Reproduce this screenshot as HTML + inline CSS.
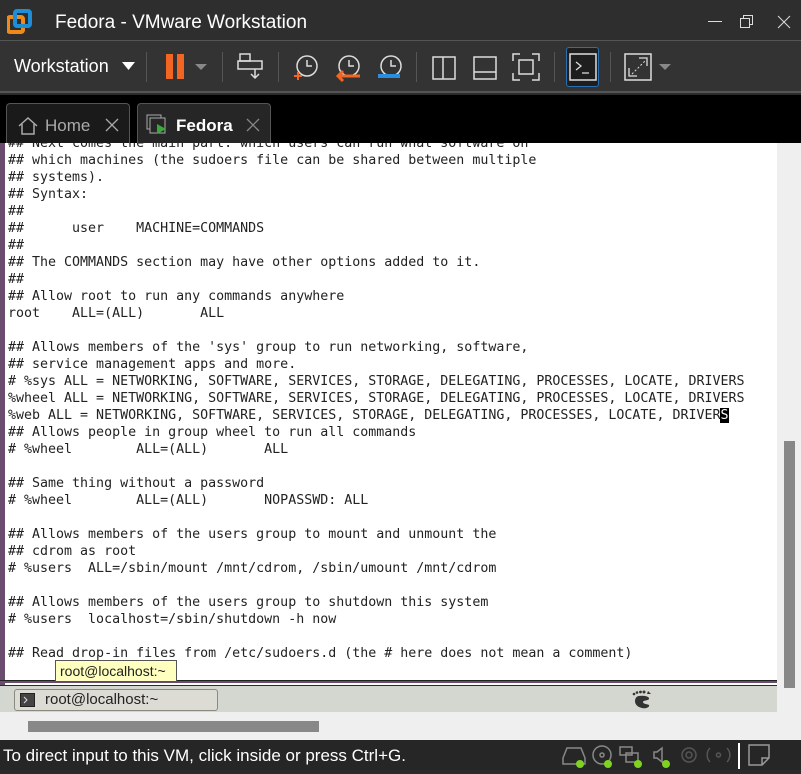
<!DOCTYPE html>
<html><head><meta charset="utf-8"><style>
*{margin:0;padding:0;box-sizing:border-box}
body{width:801px;height:774px;overflow:hidden;background:#2b2b2b;font-family:"Liberation Sans",sans-serif;position:relative}
.abs{position:absolute}
#title{left:0;top:0;width:801px;height:40px;background:#2e2e2e;color:#fff;font-size:19px}
#tool{left:0;top:40px;width:801px;height:53px;background:#333;border-top:1px solid #555;border-bottom:2px solid #555}
#tabs{left:0;top:95px;width:801px;height:48px;background:#000}
.tab{position:absolute;top:8px;height:42px;border:1px solid #555;border-bottom:none;border-radius:4px 4px 0 0;background:#1a1a1a;color:#aaa;font-size:17px}
#term{left:0;top:143px;width:777px;height:542px;background:#fff;overflow:hidden;border-left:5px solid #6a4d6e;}
#term pre{position:absolute;left:3px;top:-8px;font-family:"DejaVu Sans Mono",monospace;font-size:13.3px;line-height:17px;color:#222}
.sep{position:absolute;top:11px;width:1px;height:30px;background:#555}
svg{position:absolute}
</style></head><body>
<div id="title" class="abs">
<svg style="left:7px;top:9px" width="26" height="26"><rect x="1" y="8" width="15" height="15" rx="2" fill="none" stroke="#f08a17" stroke-width="4"/><rect x="8" y="2" width="15" height="15" rx="2" fill="none" stroke="#1e8fd6" stroke-width="4"/></svg>
<div class="abs" style="left:55px;top:12px">Fedora - VMware Workstation</div>
<div class="abs" style="left:708px;top:21px;width:14px;height:1px;background:#ddd"></div>
<svg style="left:740px;top:15px" width="14" height="14"><rect x="0.5" y="3.5" width="9" height="9" fill="none" stroke="#ddd"/><path d="M3.5 3.5V0.5h9v9h-3" fill="none" stroke="#ddd"/></svg>
<svg style="left:777px;top:15px" width="14" height="14"><path d="M1 1L13 13M13 1L1 13" stroke="#ddd"/></svg>
</div>
<div id="tool" class="abs">
<div class="abs" style="left:14px;top:15px;color:#fff;font-size:18px">Workstation</div>
<svg style="left:122px;top:21px" width="14" height="9"><path d="M0 0h13L6.5 8z" fill="#fff"/></svg>
<div class="sep" style="left:146px"></div>
<div class="abs" style="left:166px;top:13px;width:7px;height:25px;background:#f26522"></div>
<div class="abs" style="left:177px;top:13px;width:7px;height:25px;background:#f26522"></div>
<svg style="left:195px;top:23px" width="12" height="7"><path d="M0 0h12L6 6z" fill="#888"/></svg>
<div class="sep" style="left:222px"></div>
<svg style="left:237px;top:11px" width="28" height="30"><rect x="3" y="2" width="10" height="7" fill="none" stroke="#ddd" stroke-width="1.5"/><rect x="1" y="9" width="24" height="8" fill="none" stroke="#ddd" stroke-width="1.5"/><path d="M18 17v9M14 22l4 4 4-4" fill="none" stroke="#ddd" stroke-width="1.5"/></svg>
<div class="sep" style="left:278px"></div>
<svg style="left:292px;top:13px" width="28" height="28"><circle cx="15" cy="12" r="10" fill="none" stroke="#ddd" stroke-width="1.5"/><path d="M15 6v6h5" fill="none" stroke="#ddd" stroke-width="1.5"/><path d="M2 22h8M6 18v8" stroke="#f26522" stroke-width="2"/></svg>
<svg style="left:334px;top:13px" width="28" height="28"><circle cx="15" cy="12" r="10" fill="none" stroke="#ddd" stroke-width="1.5"/><path d="M15 6v6h5" fill="none" stroke="#ddd" stroke-width="1.5"/><path d="M26 22H4M9 17l-5 5 5 5" fill="none" stroke="#f26522" stroke-width="3"/></svg>
<svg style="left:376px;top:13px" width="28" height="28"><circle cx="15" cy="12" r="10" fill="none" stroke="#ddd" stroke-width="1.5"/><path d="M15 6v6h5" fill="none" stroke="#ddd" stroke-width="1.5"/><path d="M2 22h22" stroke="#2a8ee0" stroke-width="4"/></svg>
<div class="sep" style="left:416px"></div>
<svg style="left:432px;top:15px" width="26" height="26"><rect x="1" y="1" width="22" height="22" fill="none" stroke="#ddd" stroke-width="1.5"/><path d="M11 1v22" stroke="#ddd" stroke-width="1.5"/></svg>
<svg style="left:473px;top:15px" width="26" height="26"><rect x="1" y="1" width="22" height="22" fill="none" stroke="#ddd" stroke-width="1.5"/><path d="M1 16h22" stroke="#ddd" stroke-width="1.5"/></svg>
<svg style="left:512px;top:12px" width="30" height="30"><path d="M1 8V1h7M20 1h7v7M27 20v7h-7M8 27H1v-7" fill="none" stroke="#ddd" stroke-width="1.5"/><rect x="7" y="7" width="14" height="14" fill="none" stroke="#ddd" stroke-width="1.5"/></svg>
<div class="sep" style="left:554px"></div>
<div class="abs" style="left:566px;top:6px;width:33px;height:40px;border:1px solid #2a6fb0;border-radius:3px;background:#1e1e1e"></div>
<svg style="left:569px;top:12px" width="28" height="28"><rect x="1" y="1" width="26" height="26" fill="none" stroke="#ddd" stroke-width="1.5"/><path d="M7 9l5 4-5 4M13 20h7" fill="none" stroke="#ddd" stroke-width="1.3"/></svg>
<div class="sep" style="left:610px"></div>
<svg style="left:624px;top:12px" width="30" height="30"><rect x="1" y="1" width="26" height="26" fill="none" stroke="#ddd" stroke-width="1.5"/><path d="M8 21L21 8" stroke="#ddd" stroke-dasharray="2 2"/><path d="M15 5h8v8M5 15v8h8" fill="none" stroke="#ddd" stroke-width="1.3"/></svg>
<svg style="left:659px;top:23px" width="12" height="7"><path d="M0 0h12L6 6z" fill="#888"/></svg>
</div>
<div id="tabs" class="abs">
<div class="tab" style="left:6px;width:124px"><svg style="left:10px;top:12px" width="22" height="20"><path d="M2 10L11 2l9 8M5 8v10h12V8" fill="none" stroke="#aaa" stroke-width="1.5"/></svg><span class="abs" style="left:38px;top:12px">Home</span><svg style="left:98px;top:14px" width="14" height="14"><path d="M1 1L13 13M13 1L1 13" stroke="#aaa" stroke-width="1.3"/></svg></div>
<div class="tab" style="left:137px;width:134px;background:#262626"><svg style="left:8px;top:10px" width="24" height="24"><rect x="1" y="1" width="14" height="14" fill="none" stroke="#aaa"/><rect x="4" y="4" width="15" height="15" fill="#262626" stroke="#aaa"/><path d="M11 10l9 5-9 5z" fill="#3aa83a"/></svg><span class="abs" style="left:38px;top:12px;color:#fff;font-weight:bold">Fedora</span><svg style="left:108px;top:14px" width="14" height="14"><path d="M1 1L13 13M13 1L1 13" stroke="#888" stroke-width="1.3"/></svg></div>
</div>
<div id="term" class="abs"><pre>## Next comes the main part: which users can run what software on
## which machines (the sudoers file can be shared between multiple
## systems).
## Syntax:
##
##      user    MACHINE=COMMANDS
##
## The COMMANDS section may have other options added to it.
##
## Allow root to run any commands anywhere
root    ALL=(ALL)       ALL

## Allows members of the 'sys' group to run networking, software,
## service management apps and more.
# %sys ALL = NETWORKING, SOFTWARE, SERVICES, STORAGE, DELEGATING, PROCESSES, LOCATE, DRIVERS
%wheel ALL = NETWORKING, SOFTWARE, SERVICES, STORAGE, DELEGATING, PROCESSES, LOCATE, DRIVERS
%web ALL = NETWORKING, SOFTWARE, SERVICES, STORAGE, DELEGATING, PROCESSES, LOCATE, DRIVER<span style="background:#000;color:#fff">S</span>
## Allows people in group wheel to run all commands
# %wheel        ALL=(ALL)       ALL

## Same thing without a password
# %wheel        ALL=(ALL)       NOPASSWD: ALL

## Allows members of the users group to mount and unmount the
## cdrom as root
# %users  ALL=/sbin/mount /mnt/cdrom, /sbin/umount /mnt/cdrom

## Allows members of the users group to shutdown this system
# %users  localhost=/sbin/shutdown -h now

## Read drop-in files from /etc/sudoers.d (the # here does not mean a comment)</pre></div>
<div class="abs" style="left:0;top:680px;width:777px;height:3px;background:#6a4d6e;border-top:1px solid #222"></div>
<div class="abs" style="left:777px;top:143px;width:24px;height:597px;background:#efefef"></div>
<div class="abs" style="left:784px;top:441px;width:11px;height:247px;background:#888"></div>
<div class="abs" style="left:0;top:686px;width:777px;height:26px;background:#d3d7cf"></div>
<div class="abs" style="left:0;top:712px;width:777px;height:28px;background:#efefef"></div>
<div class="abs" style="left:28px;top:721px;width:291px;height:11px;background:#888"></div>
<div class="abs" style="left:14px;top:689px;width:204px;height:22px;border:1px solid #8a8a80;border-radius:3px;background:#dcdcd4;font-size:15px;color:#222"><svg style="left:5px;top:3px" width="16" height="15"><rect x="0.5" y="0.5" width="14" height="13" fill="#444" stroke="#222"/><path d="M4 4l3 3-3 3" stroke="#ddd" fill="none"/></svg><span class="abs" style="left:30px;top:1px">root@localhost:~</span></div>
<svg style="left:630px;top:689px" width="24" height="22"><g fill="#333"><circle cx="4" cy="5" r="1.3"/><circle cx="7" cy="3.5" r="1.3"/><circle cx="10.5" cy="3" r="1.4"/><circle cx="14" cy="3" r="1.5"/><path d="M18 2l3 3h-4z"/><path d="M9 7c6-1 11 1 10 3-1 2-6 1-6 3s4 2 6 3c1 2-3 4-7 3-5-1-7-4-7-7 0-3 2-5 4-5z"/></g></svg>
<div class="abs" style="left:55px;top:660px;width:122px;height:22px;background:#ffffbf;border:1px solid #555;font-size:14px;padding:2px 4px;color:#222">root@localhost:~</div>
<div class="abs" style="left:0;top:740px;width:801px;height:30px;background:#262626;color:#fff;font-size:17px"><span class="abs" style="left:3px;top:6px">To direct input to this VM, click inside or press Ctrl+G.</span>
<svg style="left:560px;top:4px" width="175" height="24"><g fill="none" stroke="#888" stroke-width="1.5"><path d="M3 14l4-10h14l4 10v6H3z"/><circle cx="42" cy="11" r="9"/><circle cx="42" cy="11" r="2"/><rect x="60" y="3" width="12" height="8"/><rect x="66" y="9" width="12" height="9"/><path d="M94 8h3l5-4v14l-5-4h-3z"/><circle cx="129" cy="11" r="7" stroke="#555"/><circle cx="129" cy="11" r="3" stroke="#555"/><path d="M150 4a10 10 0 0 0 0 14M167 4a10 10 0 0 1 0 14" stroke="#555"/><circle cx="158.5" cy="11" r="2" stroke="#555"/></g><g fill="#7ed321"><circle cx="20" cy="20" r="4"/><circle cx="48" cy="20" r="4"/><circle cx="78" cy="20" r="4"/><circle cx="106" cy="20" r="4"/></g></svg>
<div class="abs" style="left:738px;top:3px;width:2px;height:26px;background:#fff"></div>
<svg style="left:748px;top:4px" width="24" height="24"><path d="M1 1h20v13l-7 7H1z M14 21v-7h7" fill="none" stroke="#999" stroke-width="1.5"/></svg>
</div>
</body></html>
